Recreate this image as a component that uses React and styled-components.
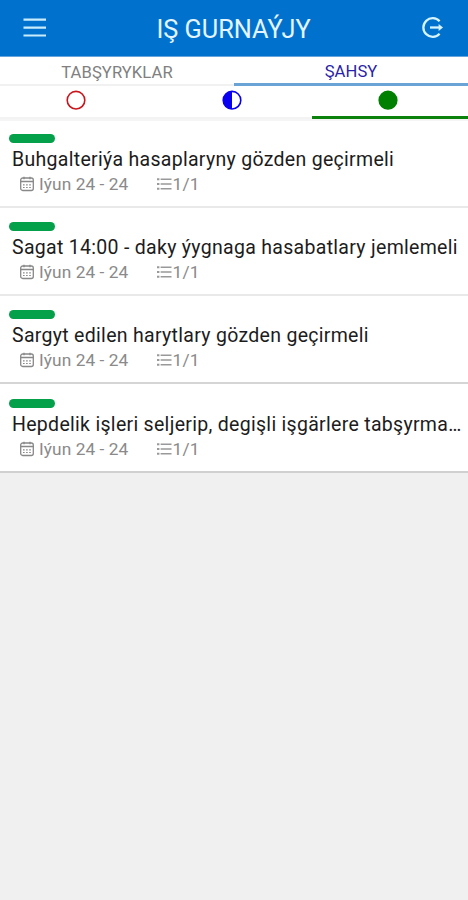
import React from 'react';
import styled, { createGlobalStyle } from 'styled-components';

const GlobalStyle = createGlobalStyle`
  * { box-sizing: border-box; }
  body { margin: 0; background: #f0f0f0; font-family: Roboto, sans-serif; }
`;

const Screen = styled.div`
  min-height: 900px;
  background: #f0f0f0;
  overflow: hidden;
`;

const Header = styled.header`
  display: flex;
  align-items: center;
  justify-content: space-between;
  height: 57px;
  padding: 0 24px 0 23px;
  background: #0072ce;
  border-bottom: 1px solid #65a5dc;
  color: #e4f5ff;
`;

const IconButton = styled.button`
  display: flex;
  padding: 0;
  border: 0;
  background: none;
  color: #c9ecfa;
`;

const AppTitle = styled.h1`
  margin: 4px 1px 0 0;
  font-size: 25.3px;
  line-height: 30px;
  font-weight: 400;
`;

const Tabs = styled.nav`
  display: grid;
  grid-template-columns: 1fr 1fr;
  height: 28px;
  background: #fff;
`;

const Tab = styled.button`
  padding: 4px 0 0;
  border: 0;
  border-bottom: ${(p) => (p.$active ? '3px solid #6aa3d6' : '2px solid #f1f1f1')};
  background: none;
  font: 400 16.6px/22px Roboto, sans-serif;
  letter-spacing: 0.08px;
  color: ${(p) => (p.$active ? '#2a1fa8' : '#808080')};
`;

const Filters = styled.div`
  display: grid;
  grid-template-columns: repeat(3, 1fr);
  height: 34px;
  background: #fff;
`;

const Filter = styled.button`
  display: flex;
  justify-content: center;
  padding: 5px 4px 0 0;
  border: 0;
  border-bottom: ${(p) => (p.$active ? '3px solid #0b820b' : '2px solid #f3f3f3')};
  background: none;
`;

const TaskList = styled.main`
  background: #fff;
  border-top: 2px solid #f5f5f5;
`;

const Task = styled.article`
  height: 88.2px;
  padding: 13px 0 0 9px;
  background: linear-gradient(${(p) => p.$line}, ${(p) => p.$line}) 0 85px / 100% 2px no-repeat;

  &:last-child { height: 87px; }
`;

const Status = styled.div`
  width: 46px;
  height: 9px;
  border-radius: 5px;
  background: #04a04a;
`;

const TaskTitle = styled.h2`
  margin: 5px 0 0 3px;
  font-size: 19.5px;
  line-height: 24px;
  font-weight: 400;
  letter-spacing: 0.3px;
  white-space: nowrap;
  color: #1c1c1c;
`;

const Meta = styled.div`
  display: flex;
  align-items: center;
  height: 24px;
  margin: 0 0 0 11px;
  font-size: 17.3px;
  line-height: 24px;
  color: #8a8a8a;
`;

const DateText = styled.span`
  width: 122.5px;
  padding-left: 5px;
  letter-spacing: 0.08px;
`;

const Count = styled.span`
  padding-left: 1px;
  letter-spacing: 0.2px;
`;

const MenuIcon = () => (
  <svg width="24" height="22" viewBox="0 0 24 22" stroke="currentColor" strokeWidth="2.2">
    <path d="M0.5 2.7H23M0.5 10.7H23M0.5 18.5H23" />
  </svg>
);

const ExitIcon = () => (
  <svg width="23" height="24" viewBox="0 0 23 24" fill="none" stroke="#d5f4fc" strokeWidth="2.3">
    <path d="M18.6 5.3A9.3 9.3 0 1 0 18.6 17.7" />
    <path d="M9 11.5H20" />
    <path d="M17.6 7.9L22 11.5L17.6 15.1Z" fill="#d5f4fc" stroke="none" />
  </svg>
);

const CircleIcon = ({ color, kind }) => (
  <svg width="20" height="20" viewBox="0 0 20 20">
    <circle cx="10" cy="10.2" r="8.8" fill={kind === 'full' ? color : 'none'} stroke={color} strokeWidth="1.6" />
    {kind === 'half' && <path d="M10 1.4A8.8 8.8 0 0 0 10 19Z" fill={color} />}
  </svg>
);

const CalendarIcon = () => (
  <svg width="14" height="16" viewBox="0 0 14 16" fill="none" stroke="#888" strokeWidth="1.3">
    <rect x="0.7" y="2" width="12.6" height="12.5" rx="2" />
    <path d="M0.7 5.5H13.3M4 0.8V3.2M10 0.8V3.2" />
    <path d="M3 8.8H11M3 11.5H11" strokeWidth="1.2" strokeDasharray="1.6 1.5" />
  </svg>
);

const ListIcon = () => (
  <svg width="15" height="14" viewBox="0 0 15 14" stroke="#999" strokeWidth="1.4">
    <path d="M3.6 2.2H14.5M3.6 7H14.5M3.6 11.8H14.5" />
    <path d="M0 2.2H2.4M0 7H2.4M0 11.8H2.4" strokeWidth="2" />
  </svg>
);

const tasks = [
  { title: 'Buhgalteriýa hasaplaryny gözden geçirmeli', line: '#e9e9e9' },
  { title: 'Sagat 14:00 - daky ýygnaga hasabatlary jemlemeli', line: '#e9e9e9' },
  { title: 'Sargyt edilen harytlary gözden geçirmeli', line: '#d5d5d5' },
  { title: 'Hepdelik işleri seljerip, degişli işgärlere tabşyrma…', line: '#d0d0d0' },
];

export default function App() {
  return (
    <Screen>
      <GlobalStyle />
      <Header>
        <IconButton aria-label="Menu"><MenuIcon /></IconButton>
        <AppTitle>IŞ GURNAÝJY</AppTitle>
        <IconButton aria-label="Exit"><ExitIcon /></IconButton>
      </Header>
      <Tabs>
        <Tab>TABŞYRYKLAR</Tab>
        <Tab $active>ŞAHSY</Tab>
      </Tabs>
      <Filters>
        <Filter><CircleIcon color="#c9151b" /></Filter>
        <Filter><CircleIcon color="#0a00f0" kind="half" /></Filter>
        <Filter $active><CircleIcon color="#008000" kind="full" /></Filter>
      </Filters>
      <TaskList>
        {tasks.map((task) => (
          <Task key={task.title} $line={task.line}>
            <Status />
            <TaskTitle>{task.title}</TaskTitle>
            <Meta>
              <CalendarIcon />
              <DateText>Iýun 24 - 24</DateText>
              <ListIcon />
              <Count>1/1</Count>
            </Meta>
          </Task>
        ))}
      </TaskList>
    </Screen>
  );
}
